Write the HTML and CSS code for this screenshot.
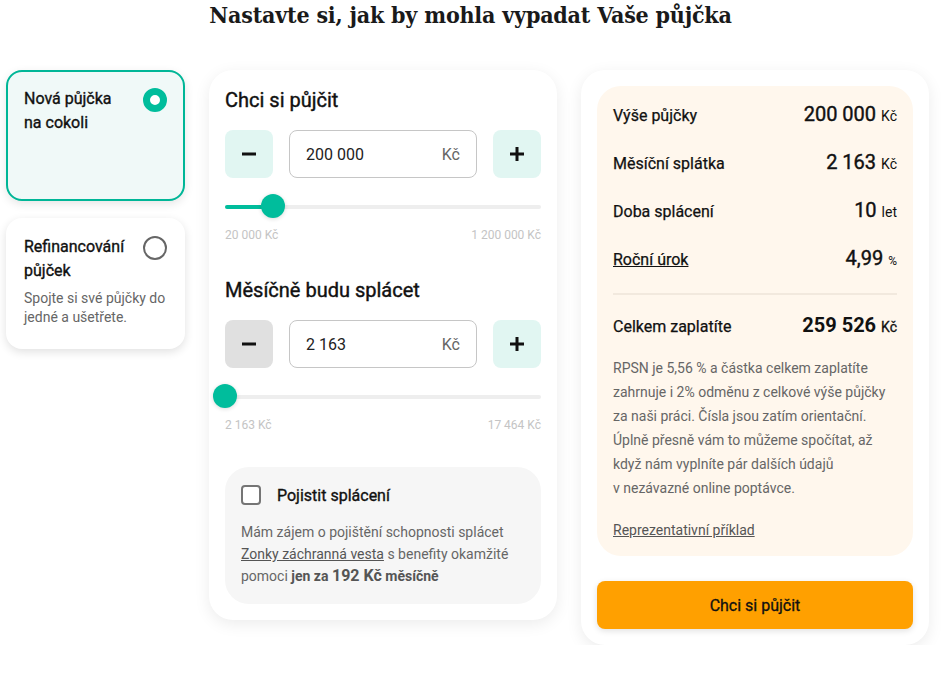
FILE: index.html
```html
<!DOCTYPE html>
<html lang="cs">
<head>
<meta charset="utf-8">
<link rel="stylesheet" href="styles.css">
</head>
<body>
<h1 class="title">Nastavte si, jak by mohla vypadat Vaše půjčka</h1>
<div class="layout">
  <div class="types">
    <div class="type type-active">
      <div class="type-head">
        <div class="type-name">Nová půjčka<br>na cokoli</div>
        <span class="radio radio-on"></span>
      </div>
    </div>
    <div class="type">
      <div class="type-head">
        <div class="type-name">Refinancování<br>půjček</div>
        <span class="radio"></span>
      </div>
      <p class="type-desc">Spojte si své půjčky do jedné a ušetřete.</p>
    </div>
  </div>

  <div class="card calc">
    <h2 class="calc-title">Chci si půjčit</h2>
    <div class="stepper">
      <button class="step">
        <svg width="14" height="14" viewBox="0 0 14 14"><rect x="0" y="5.5" width="14" height="3" fill="#111"/></svg>
      </button>
      <div class="field"><span class="field-val">200 000</span><span class="field-unit">Kč</span></div>
      <button class="step">
        <svg width="14" height="14" viewBox="0 0 14 14"><rect x="0" y="5.5" width="14" height="3" fill="#111"/><rect x="5.5" y="0" width="3" height="14" fill="#111"/></svg>
      </button>
    </div>
    <div class="slider">
      <div class="track"><div class="fill" style="width:15.3%"></div></div>
      <span class="thumb" style="left:15.3%"></span>
    </div>
    <div class="range"><span>20 000 Kč</span><span>1 200 000 Kč</span></div>

    <h2 class="calc-title calc-title-2">Měsíčně budu splácet</h2>
    <div class="stepper">
      <button class="step step-off">
        <svg width="14" height="14" viewBox="0 0 14 14"><rect x="0" y="5.5" width="14" height="3" fill="#111"/></svg>
      </button>
      <div class="field"><span class="field-val">2 163</span><span class="field-unit">Kč</span></div>
      <button class="step">
        <svg width="14" height="14" viewBox="0 0 14 14"><rect x="0" y="5.5" width="14" height="3" fill="#111"/><rect x="5.5" y="0" width="3" height="14" fill="#111"/></svg>
      </button>
    </div>
    <div class="slider">
      <div class="track"><div class="fill" style="width:0%"></div></div>
      <span class="thumb" style="left:0%"></span>
    </div>
    <div class="range"><span>2 163 Kč</span><span>17 464 Kč</span></div>

    <div class="insure">
      <label class="insure-head"><span class="checkbox"></span><span class="insure-title">Pojistit splácení</span></label>
      <p class="insure-text">Mám zájem o pojištění schopnosti splácet <a href="#">Zonky záchranná vesta</a> s benefity okamžité pomoci <b>jen za <span class="big">192 Kč</span> měsíčně</b></p>
    </div>
  </div>

  <div class="card summary">
    <div class="sum-box">
      <div class="sum-row"><span class="sum-label">Výše půjčky</span><span class="sum-val">200 000 <small>Kč</small></span></div>
      <div class="sum-row"><span class="sum-label">Měsíční splátka</span><span class="sum-val">2 163 <small>Kč</small></span></div>
      <div class="sum-row"><span class="sum-label">Doba splácení</span><span class="sum-val">10 <small>let</small></span></div>
      <div class="sum-row sum-last"><a href="#" class="sum-label sum-link">Roční úrok</a><span class="sum-val">4,99 <small class="pct">%</small></span></div>
      <div class="divider"></div>
      <div class="sum-row sum-total"><span class="sum-label">Celkem zaplatíte</span><span class="sum-val">259 526 <small>Kč</small></span></div>
      <p class="sum-text">RPSN je 5,56 % a částka celkem zaplatíte zahrnuje i 2% odměnu z celkové výše půjčky za naši práci. Čísla jsou zatím orientační. Úplně přesně vám to můžeme spočítat, až když nám vyplníte pár dalších údajů v&nbsp;nezávazné online poptávce.</p>
      <a href="#" class="example">Reprezentativní příklad</a>
    </div>
    <button class="cta">Chci si půjčit</button>
  </div>
</div>
</body>
</html>
```

FILE: styles.css
```css
* { box-sizing: border-box; }
body {
  margin: 0;
  background: #fff;
  font-family: Roboto, "Noto Sans", sans-serif;
  color: #111;
}
.medium {
  -webkit-text-stroke: 0.3px currentColor;
}
.title {
  margin: 0;
  height: 70px;
  text-align: center;
  font-family: "DejaVu Serif Condensed", "DejaVu Serif", serif;
  font-weight: bold;
  font-size: 23px;
  line-height: 30px;
  color: #1a1a1a;
  letter-spacing: -0.2px;
}
.layout {
  display: flex;
  align-items: flex-start;
  gap: 24px;
  padding-left: 6px;
}
.types {
  width: 179px;
  display: flex;
  flex-direction: column;
  gap: 17px;
}
.type {
  background: #fff;
  border-radius: 16px;
  padding: 15px 14px 16px 16px;
  min-height: 131px;
  box-shadow: 0 3px 10px rgba(0,0,0,0.12);
  border: 2px solid transparent;
}
.type-active {
  background: #f0f9f8;
  border-color: #00b697;
  box-shadow: 0 3px 10px rgba(0,0,0,0.10);
}
.type-head {
  display: flex;
  justify-content: space-between;
  align-items: flex-start;
}
.type-name {
  font-size: 16px;
  font-weight: 400;
  -webkit-text-stroke: 0.35px #111;
  line-height: 24px;
  color: #111;
}
.radio {
  width: 24px;
  height: 24px;
  border-radius: 50%;
  border: 2px solid #666;
  margin-top: 1px;
  margin-right: 2px;
  flex: none;
}
.radio-on {
  border: 7px solid #00bd9c;
  background: #fff;
}
.type-desc {
  margin: 6px 0 0;
  font-size: 14px;
  line-height: 19px;
  color: #666;
}
.card {
  width: 348px;
  background: #fff;
  border-radius: 24px;
  padding: 16px;
  box-shadow: 0 4px 16px rgba(0,0,0,0.08);
}
.calc-title {
  margin: 0 0 16px;
  font-size: 20px;
  line-height: 28px;
  font-weight: 400;
  -webkit-text-stroke: 0.4px #111;
  color: #111;
}
.calc-title-2 { margin-top: 33px; }
.stepper {
  display: flex;
  gap: 16px;
  height: 48px;
}
.step {
  width: 48px;
  height: 48px;
  border: 0;
  border-radius: 8px;
  background: #e1f6f2;
  display: flex;
  align-items: center;
  justify-content: center;
  padding: 0;
}
.step-off { background: #e0e0e0; }
.field {
  flex: 1;
  border: 1px solid #c6c6c6;
  border-radius: 8px;
  display: flex;
  align-items: center;
  justify-content: space-between;
  padding: 0 16px;
  font-size: 16px;
}
.field-val { color: #222; }
.field-unit { color: #666; }
.slider {
  position: relative;
  height: 24px;
  margin-top: 16px;
  display: flex;
  align-items: center;
}
.track {
  width: 100%;
  height: 4px;
  border-radius: 2px;
  background: #eeeeee;
  margin-top: 2px;
}
.fill {
  height: 100%;
  background: #00bd9c;
  border-radius: 2px;
}
.thumb {
  position: absolute;
  top: 0;
  width: 24px;
  height: 24px;
  margin-left: -12px;
  border-radius: 50%;
  background: #00bd9c;
  box-shadow: 0 1px 4px rgba(0,0,0,0.15);
}
.range {
  margin-top: 9px;
  display: flex;
  justify-content: space-between;
  font-size: 12px;
  line-height: 16px;
  color: #c4c4c4;
}
.insure {
  margin-top: 34px;
  background: #f6f6f6;
  border-radius: 24px;
  padding: 18px 16px 17px;
}
.insure-head {
  display: flex;
  align-items: center;
  gap: 16px;
  height: 20px;
}
.checkbox {
  width: 20px;
  height: 20px;
  border: 2px solid #757575;
  border-radius: 4px;
  background: #fff;
  flex: none;
}
.insure-title {
  font-size: 16px;
  font-weight: 400;
  -webkit-text-stroke: 0.35px #111;
  color: #111;
}
.insure-text {
  margin: 16px 0 0;
  font-size: 14px;
  line-height: 22px;
  color: #666;
}
.insure-text a { color: #555; text-decoration: underline; }
.insure-text b { font-weight: 700; color: #555; }
.insure-text .big { font-size: 16px; line-height: 1; }
.summary {
  display: flex;
  flex-direction: column;
}
.sum-box {
  background: #fff7ed;
  border-radius: 24px;
  padding: 14px 16px 14px;
  display: flex;
  flex-direction: column;
}
.sum-row {
  display: flex;
  justify-content: space-between;
  align-items: baseline;
  height: 28px;
  line-height: 28px;
  margin-bottom: 20px;
}
.sum-last { margin-bottom: 0; }
.sum-label {
  font-size: 16px;
  font-weight: 400;
  -webkit-text-stroke: 0.25px #111;
  color: #111;
}
.sum-link { color: #111; text-decoration: underline; }
.sum-val {
  font-size: 20px;
  font-weight: 400;
  -webkit-text-stroke: 0.4px #111;
  color: #111;
}
.sum-val small {
  font-size: 14px;
  font-weight: 400;
  -webkit-text-stroke: 0;
}
.sum-val small.pct { font-size: 12px; }
.sum-total .sum-val { font-weight: 700; -webkit-text-stroke: 0; }
.sum-total .sum-val small { -webkit-text-stroke: 0.3px #111; font-weight: 400; }
.sum-total { margin-bottom: 0; }
.divider {
  height: 2px;
  background: #f2e9de;
  margin: 21px 0 16px;
}
.sum-text {
  margin: 17px 0 0;
  font-size: 14px;
  line-height: 24px;
  color: #666;
}
.example {
  margin-top: 18px;
  font-size: 14px;
  line-height: 24px;
  color: #555;
  text-decoration: underline;
  align-self: flex-start;
}
.cta {
  margin-top: 25px;
  height: 48px;
  border: 0;
  border-radius: 8px;
  background: #ffa000;
  font-family: Roboto, sans-serif;
  font-size: 16px;
  font-weight: 400;
  -webkit-text-stroke: 0.3px #111;
  color: #111;
  box-shadow: 0 2px 6px rgba(0,0,0,0.12);
}
```
